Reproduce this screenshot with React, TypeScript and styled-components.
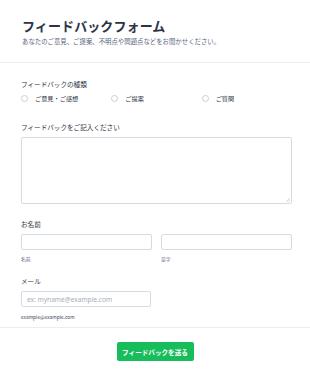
import React from "react";
import styled, { createGlobalStyle } from "styled-components";

const Global = createGlobalStyle`
  html, body { margin: 0; padding: 0; background: #ffffff; }
  body { font-family: "Noto Sans CJK JP", "Noto Sans", Inter, sans-serif; }
  * { box-sizing: border-box; }
`;

const Page = styled.div`
  width: 310px;
  background: #fff;
`;

const Header = styled.header`
  padding: 17px 22px 16.5px;
  border-bottom: 1px solid #ebecef;
`;

const Title = styled.h1`
  margin: 0;
  font-size: 13px;
  line-height: 17px;
  font-weight: 700;
  color: #2c3345;
  letter-spacing: 0.1px;
`;

const Subtitle = styled.p`
  margin: 2.5px 0 0;
  font-size: 6.4px;
  line-height: 9px;
  color: #57647e;
`;

const Body = styled.div`
  padding: 16.5px 18px 7.5px 21px;
  border-bottom: 1px solid #ebecef;
`;

const Field = styled.div<{ $gap: number }>`
  margin-bottom: ${(p) => p.$gap}px;
`;

const Label = styled.div<{ $gap?: number }>`
  font-size: 6.6px;
  line-height: 9px;
  font-weight: 400;
  color: #2c3345;
  margin-bottom: ${(p) => p.$gap ?? 5.5}px;
`;

const RadioGrid = styled.div`
  display: grid;
  grid-template-columns: repeat(3, 1fr);
`;

const RadioItem = styled.label`
  display: flex;
  align-items: center;
  gap: 7px;
  font-size: 6.2px;
  line-height: 9px;
  color: #2c3345;
`;

const RadioCircle = styled.span`
  width: 7px;
  height: 7px;
  border: 1px solid #c8ceda;
  border-radius: 50%;
  background: #fff;
  flex: none;
`;

const TextAreaWrap = styled.div`
  position: relative;
  width: 271px;
  height: 67px;
`;

const TextArea = styled.textarea`
  display: block;
  width: 100%;
  height: 100%;
  border: 1px solid #d6dae3;
  border-radius: 2px;
  margin: 0;
  padding: 4px;
  font-family: inherit;
  font-size: 7px;
  outline: none;
  resize: none;
`;

const Grip = styled.svg`
  position: absolute;
  right: 2px;
  bottom: 2px;
  width: 4px;
  height: 4px;
  pointer-events: none;
`;

const NameRow = styled.div`
  display: grid;
  grid-template-columns: 131px 131px;
  gap: 9px;
`;

const Col = styled.div`
  display: flex;
  flex-direction: column;
`;

const Input = styled.input<{ $w?: number }>`
  display: block;
  width: ${(p) => (p.$w ? `${p.$w}px` : "100%")};
  height: 16px;
  border: 1px solid #d6dae3;
  border-radius: 2px;
  margin: 0;
  padding: 0 5px;
  font-family: "Noto Sans", Inter, sans-serif;
  font-size: 6.6px;
  color: #2c3345;
  outline: none;
  &::placeholder { color: #a6adbd; }
`;

const SubLabel = styled.div<{ $gap: number; $dark?: boolean }>`
  margin-top: ${(p) => p.$gap}px;
  font-size: 4.8px;
  line-height: 7px;
  color: ${(p) => (p.$dark ? "#3b4457" : "#57647e")};
`;

const Footer = styled.div`
  display: flex;
  justify-content: center;
  padding-top: 14px;
`;

const SubmitButton = styled.button`
  width: 77px;
  height: 19px;
  background: #18bd5b;
  color: #fff;
  border: none;
  border-radius: 2px;
  font-family: inherit;
  font-size: 6.6px;
  font-weight: 700;
  padding: 0;
  cursor: pointer;
`;

const types = ["ご意見・ご感想", "ご提案", "ご質問"];

export default function App() {
  return (
    <Page>
      <Global />
      <Header>
        <Title>フィードバックフォーム</Title>
        <Subtitle>あなたのご意見、ご提案、不明点や問題点などをお聞かせください。</Subtitle>
      </Header>
      <Body>
        <Field $gap={20}>
          <Label $gap={5}>フィードバックの種類</Label>
          <RadioGrid>
            {types.map((t) => (
              <RadioItem key={t}>
                <RadioCircle />
                {t}
              </RadioItem>
            ))}
          </RadioGrid>
        </Field>
        <Field $gap={15.5}>
          <Label>フィードバックをご記入ください</Label>
          <TextAreaWrap>
            <TextArea />
            <Grip viewBox="0 0 4 4">
              <path d="M4 0 L0 4 M4 2 L2 4" stroke="#c4c8d2" strokeWidth="0.7" />
            </Grip>
          </TextAreaWrap>
        </Field>
        <Field $gap={15}>
          <Label>お名前</Label>
          <NameRow>
            <Col>
              <Input />
              <SubLabel $gap={4.5}>名前</SubLabel>
            </Col>
            <Col>
              <Input />
              <SubLabel $gap={4.5}>苗字</SubLabel>
            </Col>
          </NameRow>
        </Field>
        <Field $gap={0}>
          <Label>メール</Label>
          <Input $w={130} placeholder="ex: myname@example.com" />
          <SubLabel $gap={5.5} $dark>example@example.com</SubLabel>
        </Field>
      </Body>
      <Footer>
        <SubmitButton>フィードバックを送る</SubmitButton>
      </Footer>
    </Page>
  );
}
